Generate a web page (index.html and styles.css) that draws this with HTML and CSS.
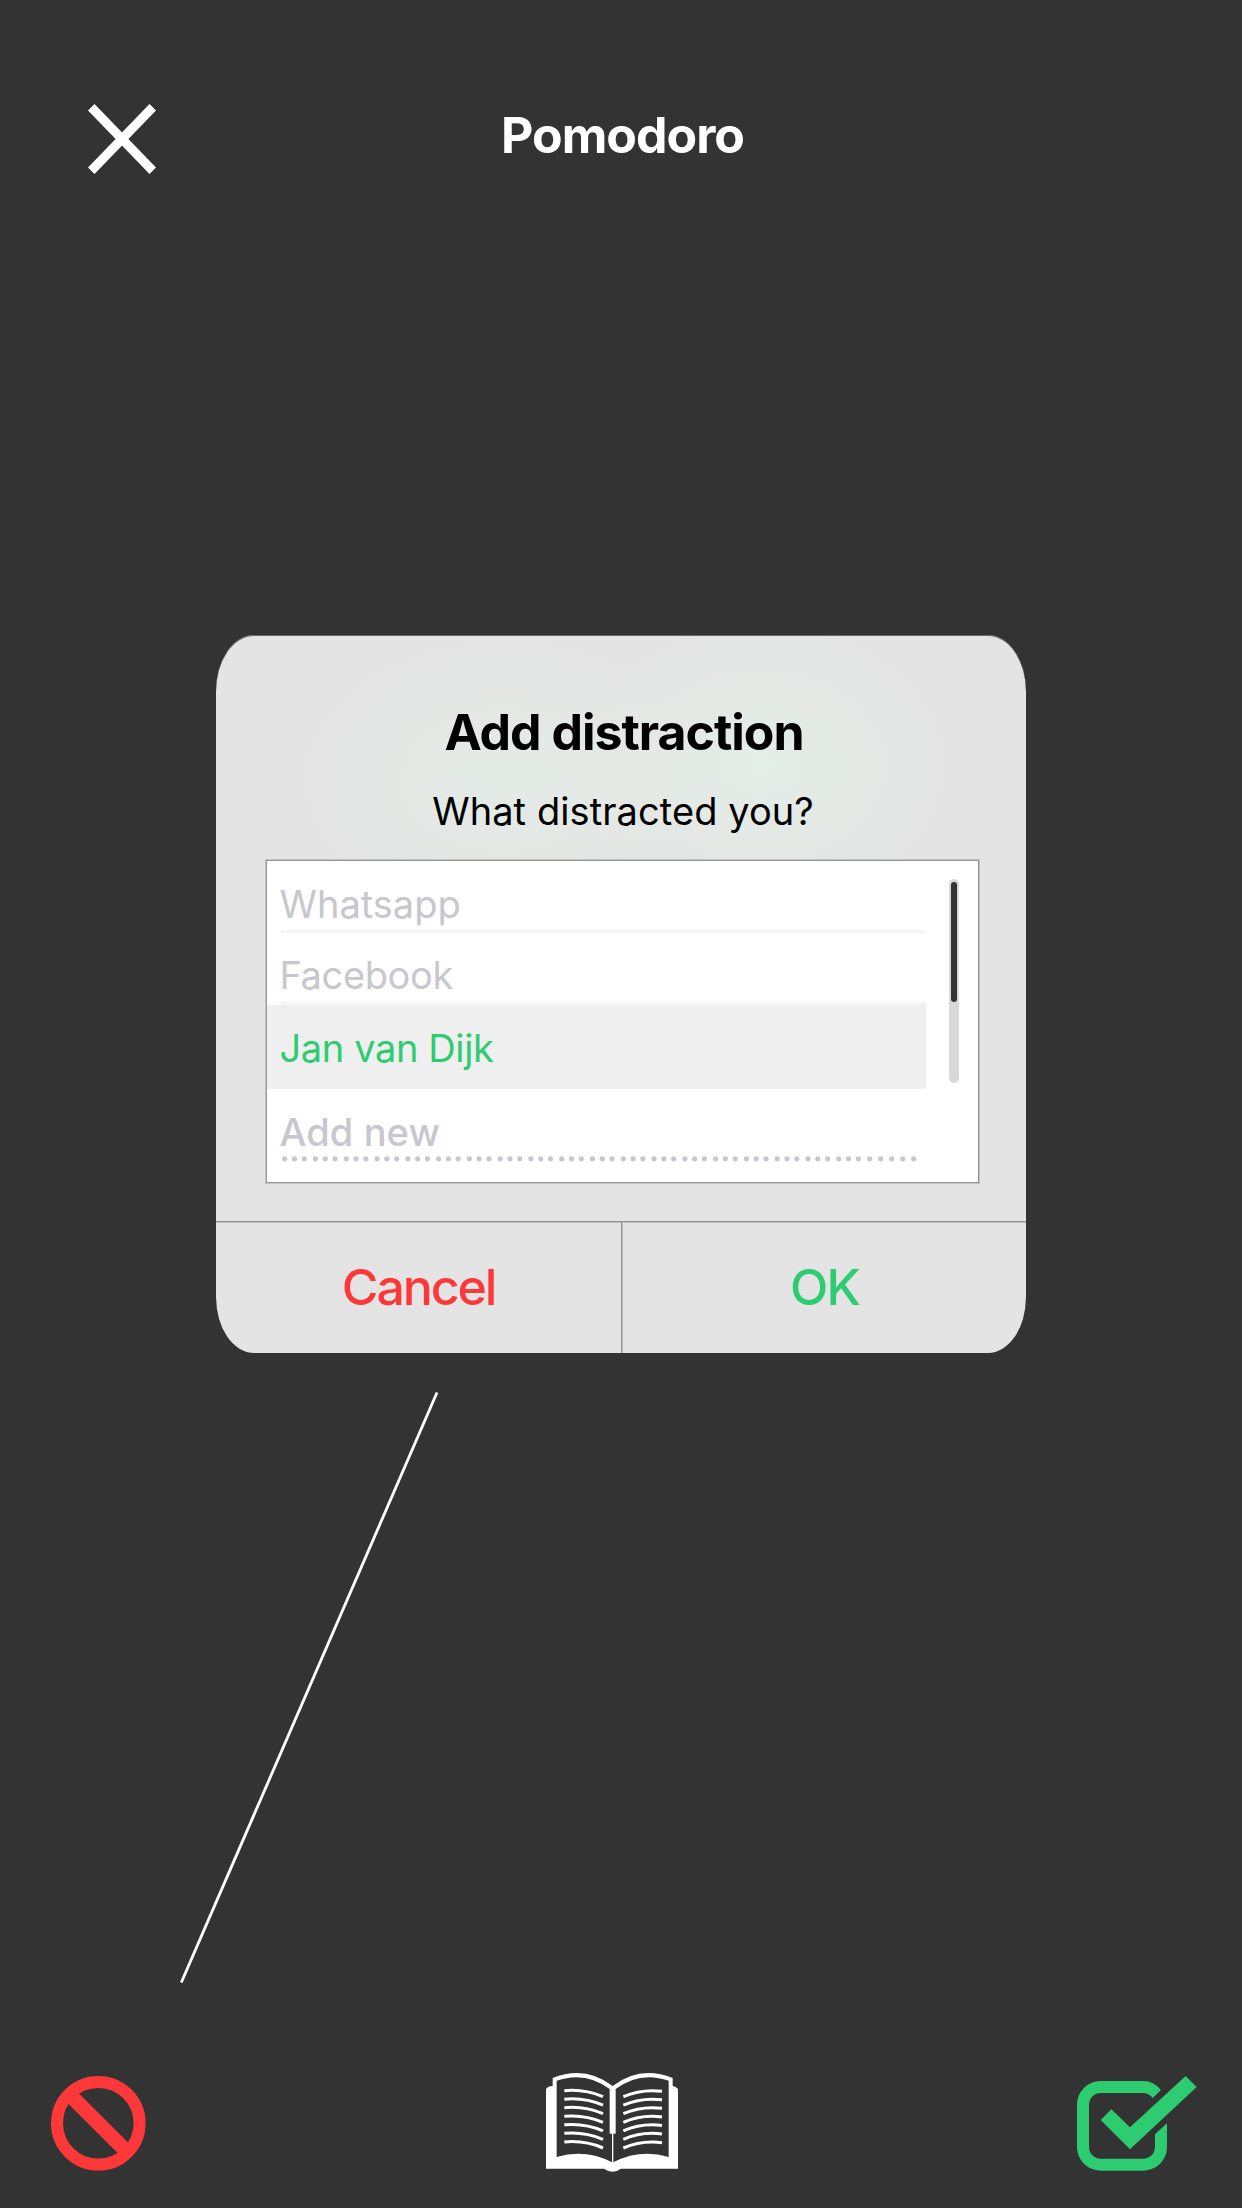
FILE: index.html
```html
<!DOCTYPE html>
<html lang="en">
<head>
<meta charset="utf-8">
<title>Pomodoro</title>
<link rel="stylesheet" href="styles.css">
</head>
<body>
<main class="screen">
  <header class="topbar">
    <svg class="close" viewBox="0 0 68 74" role="button" aria-label="Close">
      <path d="M3.2 3.3 64.8 66.7M64.8 3.3 3.2 66.7" stroke="#fff" stroke-width="9.2"/>
    </svg>
    <h1 class="title">Pomodoro</h1>
  </header>

  <section class="dialog">
    <div class="dialog-body">
      <h2 class="dialog-title">Add distraction</h2>
      <p class="dialog-text">What distracted you?</p>
      <div class="list">
        <div class="rows">
          <div class="row"><span class="label">Whatsapp</span></div>
          <div class="row row-second"><span class="label tight">Facebook</span></div>
          <div class="row-selected"><span class="label tight">Jan van Dijk</span></div>
          <div class="row-new">
            <div class="new-label"><span class="label">Add new</span></div>
            <svg class="dots" viewBox="0 0 645 6" fill="none" stroke="#c7c7cd" stroke-width="5.200" stroke-linecap="round">
              <path d="M3.700 2.800H579" stroke-dasharray="0 9.800 0 9.800 0 11.180"/>
              <path d="M588.700 2.800H633.500" stroke-dasharray="0 11"/>
            </svg>
          </div>
        </div>
        <div class="track"><div class="thumb"></div></div>
      </div>
    </div>
    <div class="actions">
      <div class="action cancel">Cancel</div>
      <div class="action ok">OK</div>
    </div>
  </section>

  <svg class="connector" viewBox="0 0 1242 720">
    <path d="M437 39.5 181.300 629.500" stroke="#fff" stroke-width="2.8"/>
  </svg>

  <footer class="toolbar">
    <svg class="ban" viewBox="0 0 95 95">
      <circle cx="47.300" cy="47.300" r="41.300" fill="none" stroke="#fc3938" stroke-width="12"/>
      <path d="M20 20 74.600 74.600" stroke="#fc3938" stroke-width="14.800"/>
    </svg>
    <svg class="book" viewBox="48 54 396 297">
      <path fill="#fff" d="M48 102Q54 93 68 93V69Q166 30 248 93Q330 30 428 69V93Q438 94 444 102V341H272Q262 350 248 350Q234 350 222 341H48Z"/>
      <path fill="#333" d="M80 77Q166 47 239 102V236H246V322Q166 281 80 306ZM416 77Q330 47 257 102V236H250V322Q330 281 416 306Z"/>
      <g fill="none" stroke="#fff" stroke-width="9">
        <path d="M103 107Q163 101 219 125M103 132.500Q163 126.500 219 150.500M103 158Q163 152 219 176M103 184Q163 178 219 202M103 209.500Q163 203.500 219 227.500M103 235Q163 229 219 253M103 261Q163 255 219 279"/>
        <path d="M280 125Q336 101 396 109M280 150.500Q336 126.500 396 134.500M280 176Q336 152 396 160M280 202Q336 178 396 186M280 227.500Q336 203.500 396 211.500M280 253Q336 229 396 237M280 279Q336 255 396 263"/>
      </g>
    </svg>
    <svg class="check" viewBox="51 48 360 285" fill="#2ecc71">
      <path d="M303 90Q281 63 250 63H122A71 71 0 0 0 51 134V261A71 71 0 0 0 122 332H250A71 71 0 0 0 321 261V190L285 223V261A35 35 0 0 1 250 296H122A35 35 0 0 1 87 261V134A35 35 0 0 1 122 99H250Q266 99 278 114Z"/>
      <path d="M122 180 154 148 210 202 377 48 410 81 210 268Z"/>
    </svg>
  </footer>
</main>
</body>
</html>
```
FILE: styles.css
```css
* { box-sizing: border-box; }
body {
  margin: 0;
  background: #333;
  font-family: Inter, "Liberation Sans", sans-serif;
}
.screen {
  width: 1242px;
  height: 2208px;
  display: flex;
  flex-direction: column;
  overflow: hidden;
}
svg { display: block; flex: none; }
.topbar {
  height: 635px;
  padding: 100px 88px 0;
  display: grid;
  grid-template-columns: 68px 1fr 68px;
  align-items: start;
}
.close { width: 68px; height: 74px; margin-top: 4px; }
.title {
  margin: 0;
  padding-left: 3px;
  color: #fff;
  font-size: 50px;
  line-height: 70px;
  font-weight: 700;
  letter-spacing: -1px;
  text-align: center;
}
.dialog {
  width: 810px;
  height: 718px;
  margin: 0 auto;
  border-radius: 38px / 56px;
  overflow: hidden;
  display: flex;
  flex-direction: column;
  flex: none;
  box-shadow: inset 0 1px #6b6464;
  background:
    radial-gradient(ellipse 190px 145px at 545px 130px, #e3eee8 0%, rgba(228, 236, 231, .6) 50%, rgba(228, 228, 228, 0) 100%),
    radial-gradient(ellipse 210px 145px at 290px 145px, #e4ebe6 0%, rgba(228, 235, 230, .6) 50%, rgba(228, 228, 228, 0) 100%),
    #e4e4e4;
}
.dialog-body { height: 586px; padding: 65px 47px 0 50px; }
.dialog-title {
  margin: 0;
  padding-left: 3px;
  font-size: 50px;
  line-height: 64px;
  font-weight: 700;
  letter-spacing: -1px;
  text-align: center;
  white-space: nowrap;
}
.dialog-text {
  margin: 24px 0 26px;
  padding-left: 1px;
  font-size: 38px;
  line-height: 46px;
  letter-spacing: .08px;
  text-align: center;
  white-space: nowrap;
}
.list {
  height: 323px;
  display: grid;
  grid-template-columns: 659px 1fr;
  background: #fff;
  border: 1px solid #929794;
  box-shadow: 0 0 0 1px #bfc3c1;
  color: #c7c7cd;
  font-size: 38px;
}
.label { margin-left: -1.5px; }
.tight { letter-spacing: -.38px; }
.row {
  height: 72px;
  margin-left: 14px;
  padding-top: 17px;
  line-height: 52px;
  border-bottom: 3px solid #f5f5f5;
}
.row-second { padding-top: 16px; }
.row-selected {
  height: 84px;
  padding: 2px 0 0 14px;
  line-height: 82px;
  background: #efefef;
  color: #2ecc71;
}
.row-new { padding: 19px 0 0 14px; }
.new-label { line-height: 48px; font-weight: 500; letter-spacing: .1px; }
.dots { width: 645px; height: 6px; }
.track {
  width: 10px;
  height: 204px;
  margin: 18px 0 0 23px;
  padding: 3px 2px;
  border-radius: 5px;
  background: #d8d8d8;
}
.thumb { height: 120px; border-radius: 3px; background: #333; }
.actions {
  height: 132px;
  display: grid;
  grid-template-columns: 405px 1fr;
  border-top: 1px solid #929292;
  box-shadow: inset 0 1px #bfbfbf;
}
.action {
  font-size: 50px;
  line-height: 130px;
  font-weight: 500;
  text-align: center;
}
.cancel { color: #fc3938; letter-spacing: -2.1px; }
.ok {
  padding-left: 1px;
  color: #2ecc71;
  letter-spacing: -1.8px;
  border-left: 1px solid #929292;
  box-shadow: inset 1px 0 #bfbfbf;
}
.connector { width: 1242px; height: 720px; }
.toolbar {
  display: flex;
  justify-content: space-between;
  align-items: flex-start;
  padding: 0 45px 0 51px;
}
.ban { width: 95px; height: 95px; margin-top: 3px; }
.book { width: 132px; height: 99px; }
.check { width: 120px; height: 95px; margin-top: 3px; }
```
